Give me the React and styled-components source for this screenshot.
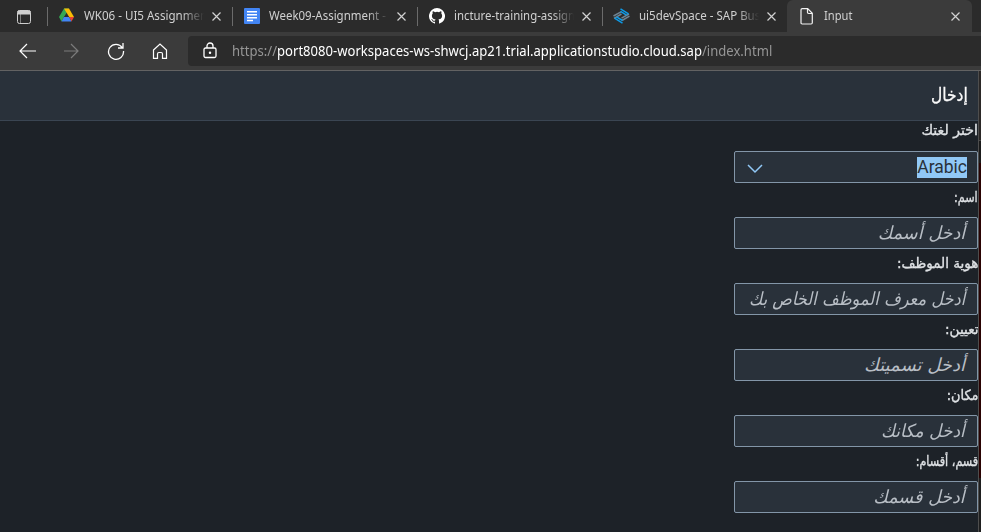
import React from "react";
import styled, { createGlobalStyle } from "styled-components";

const Global = createGlobalStyle`
  * { box-sizing: border-box; }
  body { margin: 0; background: #1d2228; overflow: hidden; }
`;

const Screen = styled.div`
  width: 981px;
  height: 532px;
  display: flex;
  flex-direction: column;
  overflow: hidden;
  background: #1d2228;
  font-family: "Noto Sans", "Open Sans", sans-serif;
`;

const TabStrip = styled.div`
  height: 32px;
  display: flex;
  align-items: stretch;
  background: #2b2b2b;
  flex: none;
`;

const TabActions = styled.div`
  width: 48px;
  padding: 8px 0 0 16px;
`;

const Tab = styled.div`
  width: ${(p) => p.$width}px;
  flex: none;
  display: flex;
  align-items: center;
  padding-left: 10px;
  position: relative;
  &::before {
    content: "";
    position: absolute;
    left: -1px;
    top: 7px;
    width: 1px;
    height: 19px;
    background: #6b6b6b;
  }
`;

const ActiveTab = styled(Tab)`
  background: #3b3b3b;
  border-radius: 6px 6px 0 0;
  padding-left: 11px;
  &::before { display: none; }
`;

const Favicon = styled.span`
  width: 17px;
  height: 16px;
  flex: none;
  display: flex;
  justify-content: center;
`;

const TabTitle = styled.span`
  width: 120px;
  margin-left: 9px;
  white-space: nowrap;
  font-size: 12px;
  line-height: 18px;
  color: #d0d0d0;
  mask-image: linear-gradient(to right, #000 98px, transparent 120px);
`;

const TitleText = styled.span`
  display: inline-block;
  transform-origin: left center;
  transform: scaleX(${(p) => p.$stretch});
`;

const CloseSlot = styled.span`
  margin-left: ${(p) => p.$gap}px;
  width: 9px;
  height: 9px;
  display: flex;
`;

const Toolbar = styled.div`
  height: 38px;
  flex: none;
  display: flex;
  align-items: center;
  background: #3b3b3b;
  padding: 0 0 0 18px;
`;

const NavButton = styled.span`
  width: 44px;
  height: 20px;
  display: flex;
  align-items: center;
`;

const AddressBar = styled.div`
  flex: 1;
  height: 30px;
  margin-left: -6px;
  display: flex;
  align-items: center;
  padding: 0 0 0 15px;
  background: #2b2b2b;
  border-radius: 4px 0 0 4px;
`;

const Url = styled.span`
  margin-left: 15px;
  white-space: nowrap;
  font-size: 13.5px;
  line-height: 20px;
  color: #969696;
  transform-origin: left center;
  transform: scaleX(${(p) => p.$stretch});
`;

const Host = styled.span`
  color: #fff;
`;

const Viewport = styled.div`
  flex: 1;
  display: flex;
  border-top: 1px solid #626262;
`;

const Page = styled.main`
  width: 978px;
  overflow: hidden;
  display: flex;
  flex-direction: column;
  background: #1d2228;
`;

const WindowEdge = styled.div`
  width: 3px;
  border-left: 1px solid #4e4e4e;
  background: linear-gradient(to bottom, #2b2827 0 69px, #484848 69px 70px, #1b1b1b 70px 92px, #2a0303 92px 407px, #1f1f1f 407px);
`;

const Header = styled.header`
  height: 50px;
  flex: none;
  display: flex;
  align-items: center;
  padding: 0 10px 2px 0;
  background: #29313a;
  border-bottom: 1px solid #3a4552;
`;

const Arabic = styled.span`
  display: block;
  white-space: nowrap;
  font-family: "DejaVu Sans", sans-serif;
  transform-origin: right center;
  transform: scaleX(${(p) => p.$stretch});
`;

const Title = styled(Arabic)`
  color: #fafafa;
  font-size: 18px;
  line-height: 24px;
  -webkit-text-stroke: 0.3px #fafafa;
`;

const Field = styled.div`
  height: ${(p) => p.$height || 66}px;
  flex: none;
  display: flex;
  flex-direction: column;
  justify-content: flex-end;
  align-items: flex-start;
`;

const Label = styled(Arabic)`
  color: #dfe2e5;
  font-size: 14px;
  line-height: 20px;
  margin-bottom: ${(p) => p.$gap || 10}px;
  -webkit-text-stroke: 0.35px #dfe2e5;
`;

const Control = styled.div`
  width: 244px;
  height: 32px;
  flex: none;
  display: flex;
  align-items: center;
  justify-content: space-between;
  padding: 0 ${(p) => p.$inset || 10}px 0 12px;
  border: 1px solid #8396a8;
  border-radius: 2px;
  background: #29313a;
`;

const Placeholder = styled(Arabic)`
  color: #b8bec5;
  font-size: 18px;
  font-style: italic;
  line-height: 26px;
`;

const Selected = styled.span`
  background: #91c8f6;
  color: #29313a;
  font-family: Roboto, "Liberation Sans", sans-serif;
  font-size: 17.5px;
  line-height: 21px;
`;

const Chevron = styled.svg`
  margin-top: 3px;
`;

function Close() {
  return (
    <svg width="9" height="9" viewBox="0 0 9 9" fill="none" stroke="#d2d2d2" strokeWidth="1.2">
      <path d="M.5.5l8 8M8.5.5l-8 8" />
    </svg>
  );
}

function Drive() {
  return (
    <svg width="15" height="14" viewBox="0 0 15 14">
      <path fill="#34a853" d="M5 .5h5L7.5 4.9 4.9 9.1 2.500 13.500 0 9.100z" />
      <path fill="#fbbc04" d="M5 .5h5l5 8.600h-4.800z" />
      <path fill="#4285f4" d="M4.900 9.100h5.300l2.300 4.400h-10z" />
      <path fill="#ea4335" d="M10.200 9.100H15l-2.500 4.400z" />
    </svg>
  );
}

function Docs() {
  return (
    <svg width="16" height="16" viewBox="0 0 16 16">
      <rect width="16" height="16" rx="1" fill="#4285f4" />
      <path stroke="#fff" strokeWidth="1.5" d="M3 3.8h10M3 6.8h10M3 9.7h10M3 12.5h6" />
    </svg>
  );
}

function GitHub() {
  return (
    <svg width="16" height="16" viewBox="0 0 16 16" fill="#fff">
      <path d="M8 0a8 8 0 0 0-2.53 15.59c.4.07.55-.17.55-.38v-1.49c-2.23.48-2.7-.95-2.7-.95-.36-.92-.89-1.17-.89-1.17-.73-.5.06-.49.06-.49.8.06 1.23.83 1.23.83.71 1.22 1.87.87 2.33.66.07-.52.28-.87.5-1.07-1.77-.2-3.64-.89-3.64-3.95 0-.87.31-1.59.82-2.15-.08-.2-.36-1.02.08-2.12 0 0 .67-.21 2.2.82a7.6 7.6 0 0 1 4 0c1.53-1.04 2.2-.82 2.2-.82.44 1.1.16 1.92.08 2.12.51.56.82 1.28.82 2.15 0 3.07-1.87 3.75-3.65 3.95.29.25.54.73.54 1.48v2.2c0 .21.15.46.55.38A8 8 0 0 0 8 0z" />
    </svg>
  );
}

function SpaceLogo() {
  return (
    <svg width="17" height="16" viewBox="0 0 17 16" fill="none" strokeWidth="1.5">
      <path stroke="#6f8391" d="M.500 8 8 3.800M1 10.300 8.500 6M8.500 10.200 16 6M9 12.500 16.500 8.200" />
      <path stroke="#0d9be8" d="M7.500 .8 15.500 5.800M7.500 3.400 13.500 7.200M1.500 10.200 9.500 15.200M3.500 8.800 9.500 12.500" />
    </svg>
  );
}

function Doc() {
  return (
    <svg width="14" height="17" viewBox="0 0 14 17" fill="none" stroke="#f2f2f2" strokeWidth="1.2">
      <path d="M2.2.7h5.5l4.6 4.6v9.5q0 1.2-1.2 1.2H2.2Q1 16 1 14.800V1.900Q1 .7 2.200.7zM7.500.8v3.500q0 1.200 1.200 1.200h3.500" />
    </svg>
  );
}

const tabs = [
  { title: "WK06 - UI5 Assignmen", width: 185, stretch: 0.965, Icon: Drive },
  { title: "Week09-Assignment -", width: 185, stretch: 0.956, Icon: Docs },
  { title: "incture-training-assign", width: 185, stretch: 0.95, Icon: GitHub },
  { title: "ui5devSpace - SAP Bus", width: 184, stretch: 0.96, Icon: SpaceLogo },
];

const fields = [
  { label: "اسم:", hint: "أدخل أسمك", labelStretch: 0.8, hintStretch: 0.98 },
  { label: "هوية الموظف:", hint: "أدخل معرف الموظف الخاص بك", labelStretch: 0.965, hintStretch: 0.9 },
  { label: "تعيين:", hint: "أدخل تسميتك", labelStretch: 0.97, hintStretch: 1 },
  { label: "مكان:", hint: "أدخل مكانك", labelStretch: 0.92, hintStretch: 0.945 },
  { label: "قسم، أقسام:", hint: "أدخل قسمك", labelStretch: 0.8, hintStretch: 0.975 },
];

export default function App() {
  return (
    <Screen>
      <Global />
      <TabStrip>
        <TabActions>
          <svg width="16" height="16" viewBox="0 0 16 16" fill="none" stroke="#cfcfcf">
            <rect x="1.500" y="1.500" width="13" height="13" rx="2" />
            <path fill="#cfcfcf" d="M2 2h12v3H2z" />
            <path strokeOpacity=".5" d="M4.500 5v9" />
          </svg>
        </TabActions>
        {tabs.map(({ title, width, stretch, Icon }) => (
          <Tab key={title} $width={width}>
            <Favicon><Icon /></Favicon>
            <TabTitle><TitleText $stretch={stretch}>{title}</TitleText></TabTitle>
            <CloseSlot $gap={8}><Close /></CloseSlot>
          </Tab>
        ))}
        <ActiveTab $width={185}>
          <Favicon><Doc /></Favicon>
          <TabTitle><TitleText $stretch={0.93}>Input</TitleText></TabTitle>
          <CloseSlot $gap={7}><Close /></CloseSlot>
        </ActiveTab>
      </TabStrip>

      <Toolbar>
        <NavButton>
          <svg width="18" height="16" viewBox="0 0 18 16" fill="none" stroke="#fff" strokeWidth="1.2"><path d="M9 1 2 8l7 7M2 8h16" /></svg>
        </NavButton>
        <NavButton>
          <svg width="18" height="16" viewBox="0 0 18 16" fill="none" stroke="#7c7c7c" strokeWidth="1.2"><path d="m9 1 7 7-7 7M16 8H2" /></svg>
        </NavButton>
        <NavButton>
          <svg width="20" height="18" viewBox="0 0 20 18" fill="none" stroke="#fff" strokeWidth="1.300"><path d="M16.200 5.500A7.500 7.500 0 1 0 17.500 9M17 1v5h-5" /></svg>
        </NavButton>
        <NavButton>
          <svg width="20" height="18" viewBox="0 0 20 18" fill="none" stroke="#fff" strokeWidth="1.200"><path d="M3.500 8 10 2l6.500 6v8.400h-4v-4.500q0-1.400-1.400-1.400H8.900q-1.400 0-1.400 1.400v4.500h-4z" /></svg>
        </NavButton>
        <AddressBar>
          <svg width="14" height="18" viewBox="0 0 14 18" fill="none" stroke="#fff" strokeWidth="1.300">
            <rect x="1" y="6" width="12" height="9.500" rx="1.500" />
            <path d="M4 6V4a3 3 0 0 1 6 0v2" />
            <circle cx="7" cy="10.700" r=".6" fill="#fff" />
          </svg>
          <Url $stretch={0.968}>
            https://<Host>port8080-workspaces-ws-shwcj.ap21.trial.applicationstudio.cloud.sap</Host>/index.html
          </Url>
        </AddressBar>
      </Toolbar>

      <Viewport>
        <Page dir="rtl" lang="ar">
          <Header><Title $stretch={0.86}>إدخال</Title></Header>
          <Field $height={62}>
            <Label $stretch={1.01} $gap={11}>اختر لغتك</Label>
            <Control>
              <Selected>Arabic</Selected>
              <Chevron width="16" height="10" viewBox="0 0 16 10" fill="none" stroke="#91c8f6" strokeWidth="1.500"><path d="m1 1 7 7 7-7" /></Chevron>
            </Control>
          </Field>
          {fields.map((f) => (
            <Field key={f.label}>
              <Label $stretch={f.labelStretch}>{f.label}</Label>
              <Control $inset={12}><Placeholder $stretch={f.hintStretch}>{f.hint}</Placeholder></Control>
            </Field>
          ))}
        </Page>
        <WindowEdge />
      </Viewport>
    </Screen>
  );
}
